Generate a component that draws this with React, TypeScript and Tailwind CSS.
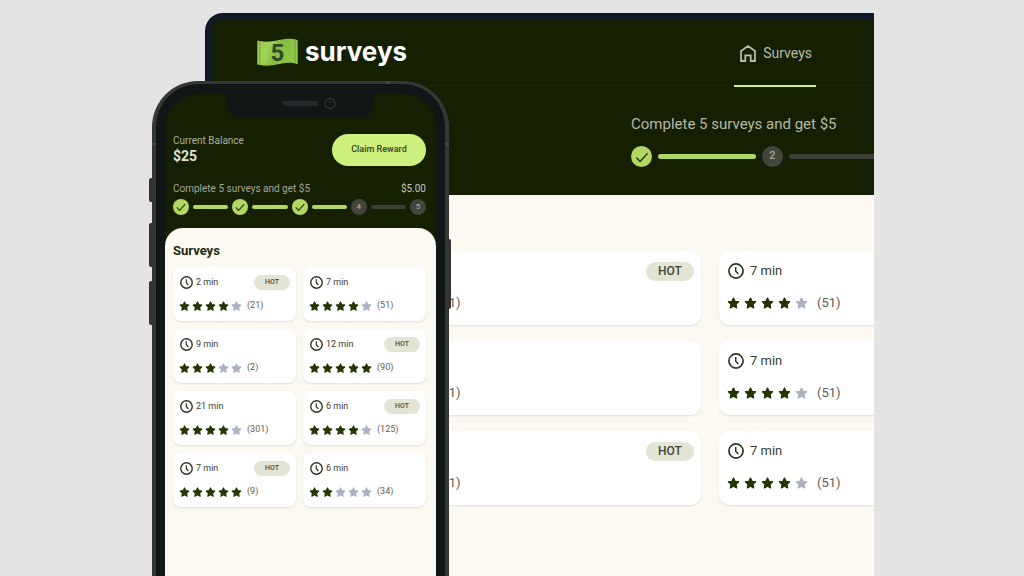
import React from 'react';
import clsx from 'clsx';

type Size = 'sm' | 'lg';

interface Survey {
  time?: string;
  rating?: number;
  count: number;
  hot?: boolean;
}

const phoneSurveys: Survey[] = [
  { time: '2 min', rating: 4, count: 21, hot: true },
  { time: '7 min', rating: 4, count: 51 },
  { time: '9 min', rating: 3, count: 2 },
  { time: '12 min', rating: 5, count: 90, hot: true },
  { time: '21 min', rating: 4, count: 301 },
  { time: '6 min', rating: 4, count: 125, hot: true },
  { time: '7 min', rating: 5, count: 9, hot: true },
  { time: '6 min', rating: 2, count: 34 },
];

// the first column sits behind the phone, so it carries no time
const desktopSurveys: Survey[] = [
  { rating: 4, count: 51, hot: true },
  { time: '7 min', rating: 4, count: 51 },
  { rating: 4, count: 51 },
  { time: '7 min', rating: 4, count: 51 },
  { rating: 4, count: 51, hot: true },
  { time: '7 min', rating: 4, count: 51 },
];

function ClockIcon({ className }: { className?: string }) {
  return (
    <svg viewBox="0 0 24 24" fill="none" stroke="currentColor" className={className} aria-hidden="true">
      <circle cx="12" cy="12" r="10.6" strokeWidth="2.6" />
      <path d="M11.6 6v6.4l3.9 4.2" strokeWidth="2.2" />
    </svg>
  );
}

function StarIcon({ className }: { className?: string }) {
  return (
    <svg viewBox="0 0 24 24" fill="currentColor" stroke="currentColor" strokeLinejoin="round" className={className} aria-hidden="true">
      <path strokeWidth="2.4" d="M12 2l2.9 5.9 6.5.9-4.7 4.6 1.1 6.8L12 17.1l-5.8 3.1 1.1-6.8-4.7-4.6 6.5-.9z" />
    </svg>
  );
}

function HomeIcon({ className }: { className?: string }) {
  return (
    <svg viewBox="0 0 16 17" fill="none" stroke="currentColor" strokeWidth="1.8" className={className} aria-hidden="true">
      <path d="M1 5.9L8 1.1l7 4.8V16h-4.3v-5.6H5.3V16H1z" />
    </svg>
  );
}

function CheckIcon({ className }: { className?: string }) {
  return (
    <svg viewBox="0 0 24 24" fill="none" stroke="currentColor" strokeWidth="2.2" className={className} aria-hidden="true">
      <path d="M3.5 12.8l5.6 5.9L20.5 6.2" />
    </svg>
  );
}

function Logo() {
  return (
    <a href="#" className="flex items-center gap-[7px]">
      <svg viewBox="0 0 41 28" className="h-7 w-[41px]" aria-hidden="true">
        <defs>
          <linearGradient id="bill" x1="0" y1="0" x2="1" y2="0.3">
            <stop offset="0" stopColor="#92c44a" />
            <stop offset="0.3" stopColor="#a4d35b" />
            <stop offset="0.6" stopColor="#86bd3f" />
            <stop offset="1" stopColor="#92c748" />
          </linearGradient>
        </defs>
        <path d="M.3 2.6C9 4.8 17 3 25 1.5C31 .4 36 .8 40.7 2.2V26.3C36 24.8 31 24.4 25 25.5C17 27 9 28.8.3 26.6z" fill="url(#bill)" />
        <path d="M2.8 3.4v23.4M38.2 1.8v23.6" stroke="#6d9c33" strokeWidth="0.8" />
        <text x="20.5" y="22.5" textAnchor="middle" fontSize="24" className="fill-[#2f4a24] font-['Roboto',sans-serif] font-bold">5</text>
      </svg>
      <span className="font-['Inter',sans-serif] text-[26px] leading-8 font-bold text-white">surveys</span>
    </a>
  );
}

function Step({ size, label }: { size: Size; label?: string }) {
  return (
    <li
      className={clsx(
        'flex shrink-0 items-center justify-center rounded-full font-medium',
        size === 'sm' ? 'size-4 text-[8px]' : 'size-[21px] text-[11px]',
        label ? 'bg-[#41453a] text-[#a5a99b]' : 'bg-[#b1d765] text-[#2a3a0c]',
      )}
    >
      {label ?? <CheckIcon className={size === 'sm' ? 'size-3' : 'size-4'} />}
    </li>
  );
}

function Bar({ done, className }: { done?: boolean; className?: string }) {
  return <li aria-hidden="true" className={clsx(done ? 'bg-[#b1d765]' : 'bg-[#3b3f35]', className)} />;
}

function SurveyCard({ survey, size }: { survey: Survey; size: Size }) {
  const sm = size === 'sm';
  const { time, rating = 0, count, hot } = survey;

  return (
    <li
      className={clsx(
        'flex flex-col bg-white shadow-[0_1px_2px_rgba(40,40,20,0.12)]',
        sm ? 'gap-[10px] rounded-[8px] pt-2 pr-[6px] pb-[9px] pl-[6px]' : 'gap-[14px] rounded-[10px] pt-[10px] pr-[7px] pb-[14px] pl-2',
      )}
    >
      <div className={clsx('flex items-center', sm ? 'h-[15px]' : 'h-5')}>
        {time && (
          <span className={clsx('flex items-center pl-px text-[#3a3e30]', sm ? 'gap-[3px] text-[9px]' : 'gap-[6px] text-[13px]')}>
            <ClockIcon className={clsx('text-[#2e3522]', sm ? 'size-[13px]' : 'size-4')} />
            {time}
          </span>
        )}
        {hot && (
          <span
            className={clsx(
              'ml-auto flex items-center justify-center rounded-full bg-[#e2e5d4] font-medium text-[#41473a]',
              sm ? 'h-[15px] w-9 text-[7px]' : 'h-[19px] w-12 text-[12px]',
            )}
          >
            HOT
          </span>
        )}
      </div>
      <div className={clsx('flex items-center', sm ? 'h-3 gap-[2px]' : 'h-4 gap-1')}>
        {[1, 2, 3, 4, 5].map((n) => (
          <StarIcon
            key={n}
            className={clsx(sm ? 'size-[11px]' : 'size-[13px]', n <= rating ? 'text-[#233600]' : 'text-[#adb2c2]')}
          />
        ))}
        <span className={clsx('text-[#5d6056]', sm ? 'pl-[3px] text-[9px]' : 'pl-[5px] text-[13px]')}>({count})</span>
      </div>
    </li>
  );
}

function Desktop() {
  return (
    <main className="mt-[13px] mr-[150px] ml-[205px] flex h-full flex-col overflow-hidden rounded-tl-[18px] border-t-[6px] border-l-[6px] border-[#0f192a] bg-[#0f192a]">
      <div className="rounded-tl-[12px] bg-[#151f01]">
        <header className="flex h-[67px] items-center justify-between border-b border-[#1d2803] pr-[58px] pl-[46px]">
          <Logo />
          <nav className="h-full">
            <a href="#" className="-mb-px flex h-[68px] items-center gap-[7px] border-b-2 border-[#cdf07f] pt-[2px] pr-1 pl-[6px] text-[14px] text-[#b9bda9]">
              <HomeIcon className="h-[17px] w-4" />
              Surveys
            </a>
          </nav>
        </header>
        <section className="flex h-[109px] flex-col gap-3 pt-7 pl-[420px]">
          <p className="text-[15px] leading-5 text-[#b5b9a6]">Complete 5 surveys and get $5</p>
          <ol className="flex items-center">
            <Step size="lg" />
            <Bar done className="mx-[6px] h-[5px] w-[98px] shrink-0 rounded-full" />
            <Step size="lg" label="2" />
            <Bar className="ml-[6px] h-[5px] flex-1 rounded-l-full" />
          </ol>
        </section>
      </div>
      <div className="flex-1 bg-[#fcf9f2] pt-14">
        {/* grid runs past the right edge of the frame */}
        <ul className="-mr-[207px] ml-32 grid grid-cols-2 gap-x-[18px] gap-y-4">
          {desktopSurveys.map((survey, i) => (
            <SurveyCard key={i} survey={survey} size="lg" />
          ))}
        </ul>
      </div>
    </main>
  );
}

function Phone() {
  return (
    <aside className="absolute top-[81px] bottom-0 left-[152px] w-[297px]">
      {/* side buttons */}
      <span className="absolute top-[97px] -left-[3px] h-6 w-1 rounded-l-[2px] bg-[#333]" />
      <span className="absolute top-[142px] -left-[3px] h-11 w-1 rounded-l-[2px] bg-[#333]" />
      <span className="absolute top-[200px] -left-[3px] h-11 w-1 rounded-l-[2px] bg-[#333]" />
      <span className="absolute top-[158px] -right-[2px] h-[70px] w-1 rounded-r-[2px] bg-[#333]" />

      <div className="h-full overflow-hidden rounded-t-[46px] border-x-4 border-t-[3px] border-[#363636] bg-[#111617] px-[9px] pt-[10px]">
        <div className="flex h-full flex-col rounded-t-[34px] bg-[#151f01]">
          <div className="flex h-10 shrink-0 justify-center">
            <svg viewBox="0 0 159 24" className="h-6 w-[159px]" aria-hidden="true">
              <path d="M0 0Q6 0 6 6V9Q6 23 20 23H138Q152 23 152 9V6Q152 0 158 0z" fill="#111617" />
              <rect x="62" y="7" width="35" height="5" rx="2.5" fill="#242a2b" />
              <circle cx="109" cy="9.5" r="5" fill="#111617" stroke="#2a3031" strokeWidth="1.6" />
              <circle cx="109" cy="8" r="1" fill="#2a3031" />
            </svg>
          </div>
          <div className="flex items-start justify-between pr-[10px] pl-2">
            <div>
              <p className="text-[10px] leading-[14px] text-[#adb19f]">Current Balance</p>
              <p className="text-[14px] leading-4 font-bold text-[#dfe2d3]">$25</p>
            </div>
            <button type="button" className="h-8 w-[94px] rounded-full bg-[#cdf07f] text-[9px] font-medium text-[#35431a]">
              Claim Reward
            </button>
          </div>
          <div className="mt-[17px] flex items-center justify-between pr-[10px] pl-2 text-[10px] leading-3">
            <p className="text-[#a5a997]">Complete 5 surveys and get $5</p>
            <p className="text-[#c8ccbb]">$5.00</p>
          </div>
          <ol className="mt-1 flex items-center pr-[10px] pl-2">
            <Step size="sm" />
            <Bar done className="mx-1 h-1 flex-1 rounded-full" />
            <Step size="sm" />
            <Bar done className="mx-1 h-1 flex-1 rounded-full" />
            <Step size="sm" />
            <Bar done className="mx-1 h-1 flex-1 rounded-full" />
            <Step size="sm" label="4" />
            <Bar className="mx-1 h-1 flex-1 rounded-full" />
            <Step size="sm" label="5" />
          </ol>
          <section className="mt-[13px] flex-1 rounded-t-[18px] bg-[#fcf9f2] pt-[15px] pr-[10px] pl-2">
            <h2 className="text-[13px] leading-4 font-bold text-[#1f2a0c]">Surveys</h2>
            <ul className="mt-2 grid grid-cols-2 gap-x-[7px] gap-y-2">
              {phoneSurveys.map((survey, i) => (
                <SurveyCard key={i} survey={survey} size="sm" />
              ))}
            </ul>
          </section>
        </div>
      </div>

      {/* antenna bands */}
      <span className="absolute top-0 left-[234px] h-[3px] w-1 bg-[#4a4a4a]" />
      <span className="absolute top-[62px] left-0 h-[3px] w-1 bg-[#454545]" />
      <span className="absolute top-[62px] right-0 h-[3px] w-1 bg-[#454545]" />
    </aside>
  );
}

export default function App() {
  return (
    <div className="relative h-screen overflow-hidden bg-[#e4e4e4] font-['Roboto',sans-serif]">
      <Desktop />
      <Phone />
    </div>
  );
}
